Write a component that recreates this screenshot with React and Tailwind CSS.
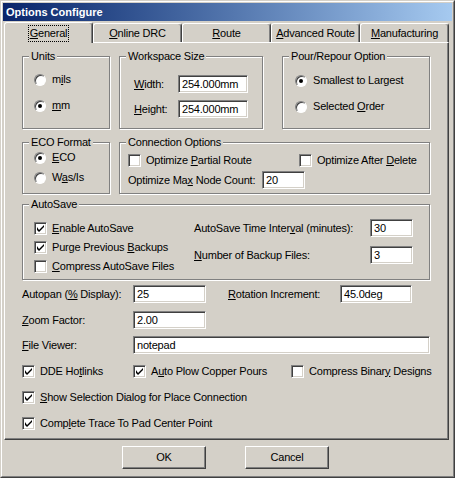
import React from 'react';

const sunken =
  'border border-t-[#808080] border-l-[#808080] border-b-white border-r-white shadow-[inset_1px_1px_0_#404040,inset_-1px_-1px_0_#d4d0c8]';

const U = ({ children }) => <span className="underline">{children}</span>;

const Check = ({ checked, children, className = '' }) => (
  <div className={`flex items-center gap-[5px] ${className}`}>
    <div className={`w-[13px] h-[13px] shrink-0 bg-white flex items-center justify-center ${sunken}`}>
      {checked && (
        <svg width="7" height="7" viewBox="0 0 7 7">
          <path d="M0 2v3l2 2 5-5V0L2 5z" fill="#000" />
        </svg>
      )}
    </div>
    <span className="whitespace-nowrap">{children}</span>
  </div>
);

const Radio = ({ checked, children }) => (
  <div className="h-[13px] flex items-center gap-[6px]">
    <div className="w-[12px] h-[12px] shrink-0 rounded-full bg-white border border-t-[#808080] border-l-[#808080] border-b-white border-r-white shadow-[inset_1px_1px_0_#404040] flex items-center justify-center">
      {checked && <div className="w-[4px] h-[4px] rounded-full bg-black" />}
    </div>
    <span className="whitespace-nowrap">{children}</span>
  </div>
);

const Field = ({ value, className = '' }) => (
  <div className={`h-[18px] bg-white flex items-center pl-[3px] ${sunken} ${className}`}>{value}</div>
);

const Group = ({ label, className = '', children }) => (
  <div className={`relative shrink-0 border border-[#808080] shadow-[inset_1px_1px_0_#fff,1px_1px_0_#fff] ${className}`}>
    <span className="absolute -top-[7px] left-[6px] px-[2px] bg-[#d4d0c8] leading-[13px] whitespace-nowrap">{label}</span>
    {children}
  </div>
);

const tabs = [
  { key: 'g', label: <><U>G</U>eneral</>, active: true },
  { key: 'o', label: <><U>O</U>nline DRC</> },
  { key: 'r', label: <><U>R</U>oute</> },
  { key: 'a', label: <><U>A</U>dvanced Route</> },
  { key: 'm', label: <><U>M</U>anufacturing</> },
];

export default function App() {
  return (
    <div className="w-[455px] h-[478px] bg-[#d4d0c8] border border-t-[#d4d0c8] border-l-[#d4d0c8] border-r-[#404040] border-b-[#404040] font-['Liberation_Sans',Arial,sans-serif] text-[11px] leading-[13px] tracking-[-0.2px] text-black">
      <div className="h-full border border-t-white border-l-white border-r-[#808080] border-b-[#808080] p-[1px] flex flex-col">
        {/* Title bar */}
        <div className="h-[18px] shrink-0 bg-linear-to-r from-[#0a246a] to-[#a6caf0] flex items-center pl-[3px] text-white font-bold tracking-normal">
          Options Configure
        </div>

        {/* Tabs */}
        <div className="h-[21px] shrink-0 flex items-end pl-[1px]">
          {tabs.map(t =>
            t.active ? (
              <div
                key={t.key}
                className="relative z-10 w-[89px] h-[21px] -mb-[1px] bg-[#d4d0c8] border-t border-l border-r border-t-white border-l-white border-r-[#404040] shadow-[inset_-1px_0_0_#808080] rounded-t-[3px] flex items-center justify-center"
              >
                <span className="border border-dotted border-black px-[1px] py-[1px]">{t.label}</span>
              </div>
            ) : (
              <div
                key={t.key}
                className="w-[89px] h-[19px] border-t border-l border-r border-t-white border-l-white border-r-[#404040] shadow-[inset_-1px_0_0_#808080] rounded-t-[3px] flex items-center justify-center whitespace-nowrap"
              >
                {t.label}
              </div>
            )
          )}
        </div>

        {/* Tab panel */}
        <div className="w-[445px] h-[398px] shrink-0 ml-[1px] border border-t-white border-l-white border-r-[#404040] border-b-[#404040] shadow-[inset_-1px_-1px_0_#808080] pt-[13px] pl-[17px] flex flex-col">
          <div className="flex">
            <Group label="Units" className="w-[88px] h-[73px] pt-[16px] pl-[11px] flex flex-col gap-[13px]">
              <Radio>m<U>i</U>ls</Radio>
              <Radio checked><U>m</U>m</Radio>
            </Group>
            <Group label="Workspace Size" className="w-[144px] h-[73px] ml-[9px] pt-[18px] pl-[14px] flex flex-col gap-[7px]">
              <div className="flex items-center">
                <span className="w-[44px]"><U>W</U>idth:</span>
                <Field value="254.000mm" className="w-[70px]" />
              </div>
              <div className="flex items-center">
                <span className="w-[44px]"><U>H</U>eight:</span>
                <Field value="254.000mm" className="w-[70px]" />
              </div>
            </Group>
            <Group label="Pour/Repour Option" className="w-[148px] h-[73px] ml-[19px] pt-[17px] pl-[12px] flex flex-col gap-[13px]">
              <Radio checked>Smallest to Largest</Radio>
              <Radio>Selected <U>O</U>rder</Radio>
            </Group>
          </div>

          <div className="flex mt-[13px]">
            <Group label="ECO Format" className="w-[88px] h-[52px] pt-[8px] pl-[11px] flex flex-col gap-[7px]">
              <Radio checked><U>E</U>CO</Radio>
              <Radio>W<U>a</U>s/Is</Radio>
            </Group>
            <Group label="Connection Options" className="w-[311px] h-[52px] ml-[9px] pt-[11px] pl-[8px] flex flex-col">
              <div className="flex h-[13px] items-center">
                <Check className="w-[171px]">Optimize <U>P</U>artial Route</Check>
                <Check>Optimize After <U>D</U>elete</Check>
              </div>
              <div className="flex items-center mt-[4px]">
                <span className="w-[134px] whitespace-nowrap">Optimize Ma<U>x</U> Node Count:</span>
                <Field value="20" className="w-[43px]" />
              </div>
            </Group>
          </div>

          <Group label="AutoSave" className="w-[408px] h-[76px] mt-[10px] pt-[14px] pl-[11px] flex">
            <div className="w-[160px] flex flex-col">
              <Check checked className="h-[19px]"><U>E</U>nable AutoSave</Check>
              <Check checked className="h-[19px]">Purge Previous <U>B</U>ackups</Check>
              <Check className="h-[19px]"><U>C</U>ompress AutoSave Files</Check>
            </div>
            <div className="flex flex-col gap-[9px]">
              <div className="flex items-center">
                <span className="w-[176px] whitespace-nowrap">AutoSave Time Inter<U>v</U>al (minutes):</span>
                <Field value="30" className="w-[43px]" />
              </div>
              <div className="flex items-center">
                <span className="w-[176px] whitespace-nowrap"><U>N</U>umber of Backup Files:</span>
                <Field value="3" className="w-[43px]" />
              </div>
            </div>
          </Group>

          <div className="flex flex-col mt-[5px]">
            <div className="flex items-center h-[18px]">
              <span className="w-[111px] whitespace-nowrap">Autopan (<U>%</U> Display):</span>
              <Field value="25" className="w-[73px]" />
              <span className="w-[112px] ml-[22px] whitespace-nowrap"><U>R</U>otation Increment:</span>
              <Field value="45.0deg" className="w-[72px]" />
            </div>
            <div className="flex items-center h-[18px] mt-[8px]">
              <span className="w-[111px]"><U>Z</U>oom Factor:</span>
              <Field value="2.00" className="w-[73px]" />
            </div>
            <div className="flex items-center h-[18px] mt-[7px]">
              <span className="w-[111px]"><U>F</U>ile Viewer:</span>
              <Field value="notepad" className="w-[297px]" />
            </div>
            <div className="flex items-center h-[18px] mt-[8px]">
              <Check checked className="w-[111px]">DDE Ho<U>t</U>links</Check>
              <Check checked className="w-[158px]">A<U>u</U>to Plow Copper Pours</Check>
              <Check>Compress Binar<U>y</U> Designs</Check>
            </div>
            <div className="flex items-center h-[18px] mt-[8px]">
              <Check checked><U>S</U>how Selection Dialog for Place Connection</Check>
            </div>
            <div className="flex items-center h-[18px] mt-[8px]">
              <Check checked>Comp<U>l</U>ete Trace To Pad Center Point</Check>
            </div>
          </div>
        </div>

        {/* Buttons */}
        <div className="flex mt-[6px] pl-[119px] gap-[39px]">
          <button className="w-[84px] h-[23px] flex items-center justify-center bg-[#d4d0c8] border border-t-white border-l-white border-r-[#404040] border-b-[#404040] shadow-[inset_-1px_-1px_0_#808080]">
            OK
          </button>
          <button className="w-[84px] h-[23px] flex items-center justify-center bg-[#d4d0c8] border border-t-white border-l-white border-r-[#404040] border-b-[#404040] shadow-[inset_-1px_-1px_0_#808080]">
            Cancel
          </button>
        </div>
      </div>
    </div>
  );
}
